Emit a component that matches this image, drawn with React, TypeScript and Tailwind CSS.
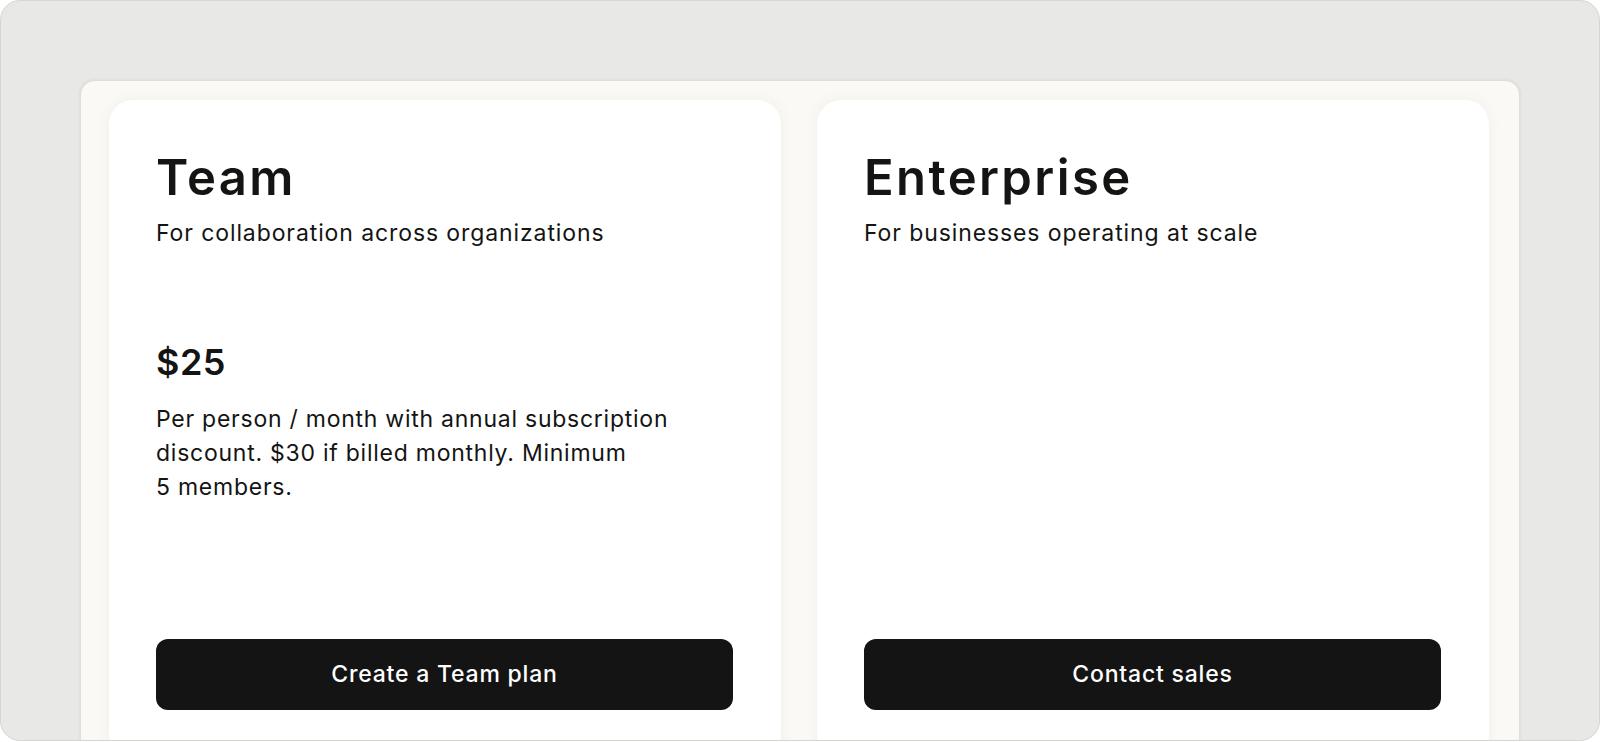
import React from 'react';

const plans = [
  {
    name: 'Team',
    tagline: 'For collaboration across organizations',
    price: '$25',
    details: ['Per person / month with annual subscription', 'discount. $30 if billed monthly. Minimum', '5 members.'],
    cta: 'Create a Team plan',
  },
  {
    name: 'Enterprise',
    tagline: 'For businesses operating at scale',
    price: null,
    details: [],
    cta: 'Contact sales',
  },
];

export default function App() {
  return (
    <div className="h-[742px] w-[1600px] overflow-hidden bg-white" style={{ fontFamily: 'Inter, "Noto Sans", sans-serif' }}>
      <div className="h-[741px] overflow-hidden rounded-[20px] border border-[#d6d6d3] bg-[#e8e8e6] px-[80px] pt-[80px]">
        <div className="h-full rounded-t-[14px] bg-[#faf9f6] pl-[28px] pr-[30px] pt-[19px] shadow-[0_0_4px_rgba(0,0,0,0.12)]">
          <div className="grid grid-cols-2 gap-[36px]">
            {plans.map((plan) => (
              <div
                key={plan.name}
                className="flex h-[658px] flex-col rounded-[24px] bg-white pl-[47px] pr-[48px] pt-[48px] text-[#141413] shadow-[0_0_12px_rgba(240,238,230,0.9)]"
              >
                <h2 className="text-[49px] font-semibold leading-[60px] tracking-[2.4px]">{plan.name}</h2>
                <p className="mt-[10px] text-[23px] leading-[30px] tracking-[0.9px]">{plan.tagline}</p>

                {plan.price && (
                  <div className="mt-[92px]">
                    <div className="text-[36px] font-semibold leading-[44px] tracking-[0.5px]">{plan.price}</div>
                    <p className="mt-[18px] text-[23px] leading-[34px] tracking-[0.75px]">
                      {plan.details.map((line, i) => (
                        <React.Fragment key={i}>
                          {line}
                          {i < plan.details.length - 1 && <br />}
                        </React.Fragment>
                      ))}
                    </p>
                  </div>
                )}

                <button className="mt-auto mb-[48px] h-[71px] w-full rounded-[12px] bg-[#141414] text-[23px] font-medium tracking-[0.8px] text-white">
                  {plan.cta}
                </button>
              </div>
            ))}
          </div>
        </div>
      </div>
    </div>
  );
}
